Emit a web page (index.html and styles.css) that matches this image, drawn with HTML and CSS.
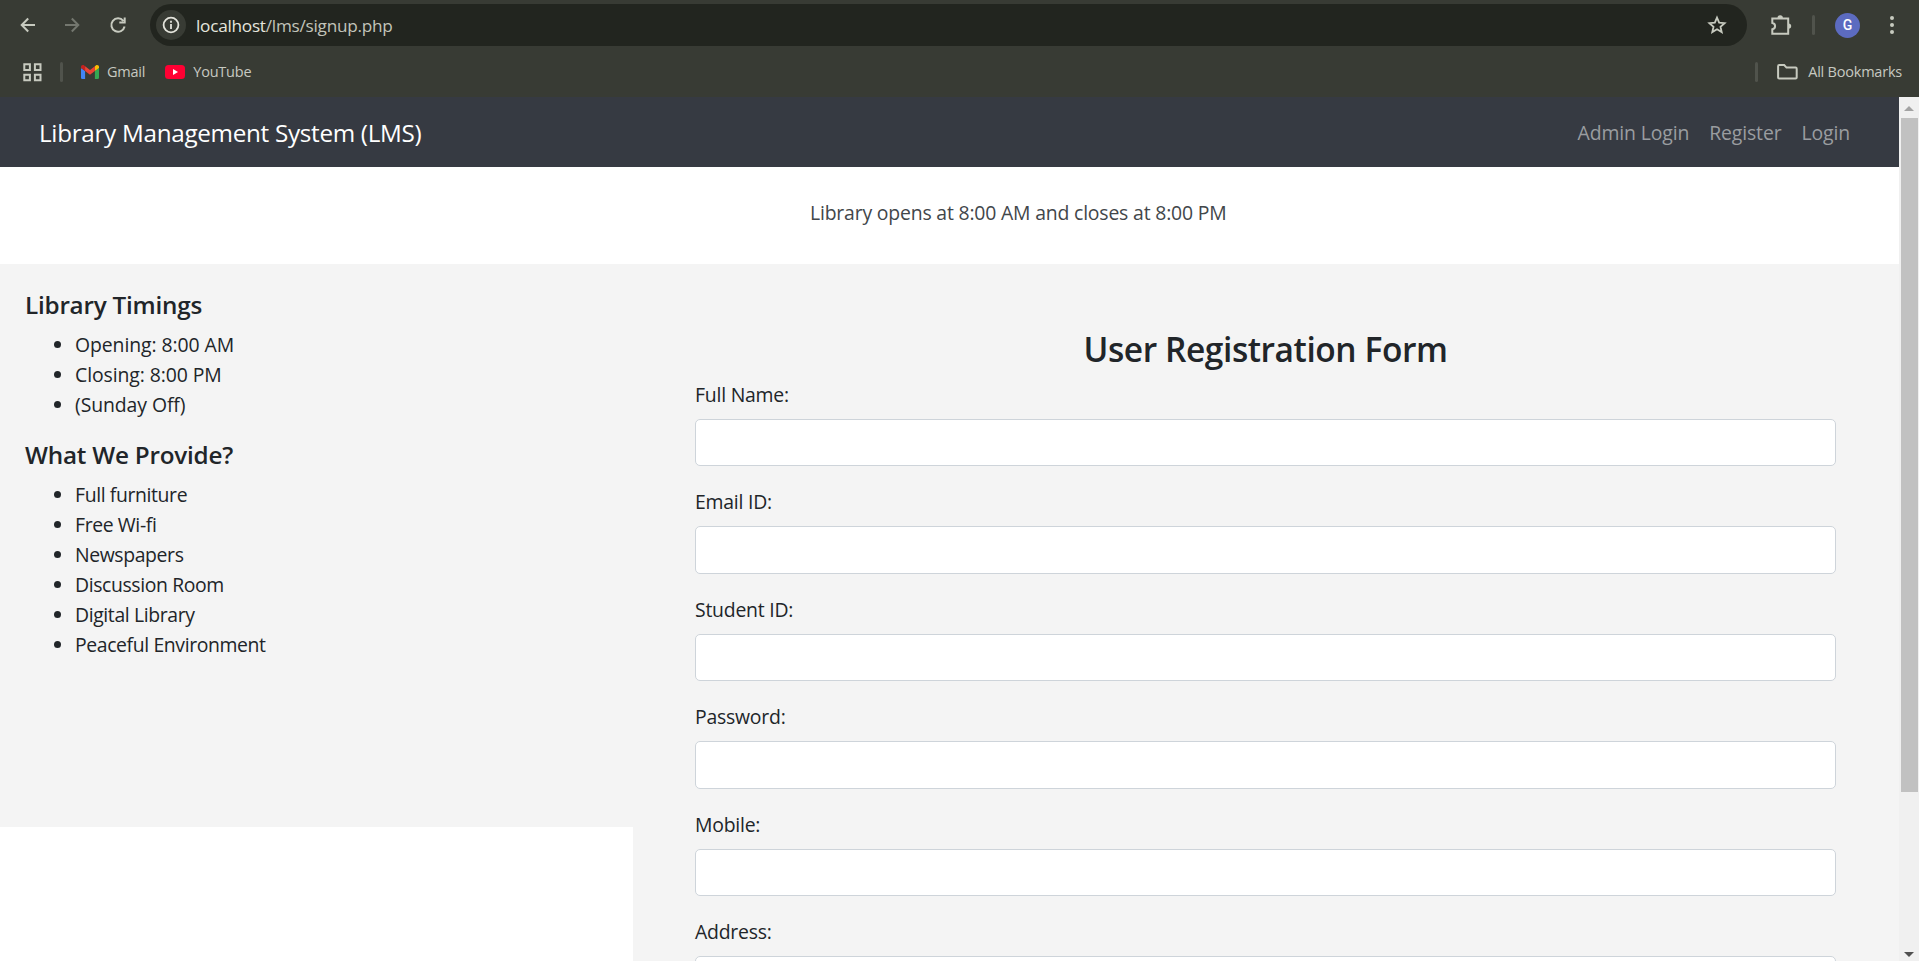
FILE: index.html
```
<!DOCTYPE html>
<html lang="en">
<head>
<meta charset="utf-8">
<title>LMS - Sign up</title>
<link rel="stylesheet" href="styles.css">
</head>
<body>
<header class="chrome">
  <div class="toolbar">
    <svg class="icon back" width="16" height="16" viewBox="0 0 16 16"><path d="M15 8H2M8.200 1.500L1.700 8l6.500 6.500"/></svg>
    <svg class="icon forward" width="16" height="16" viewBox="0 0 16 16"><path d="M1 8h13M7.800 1.500L14.300 8l-6.500 6.500"/></svg>
    <svg class="icon reload" width="18" height="18" viewBox="0 0 18 18"><path d="M14.300 4.800A6.700 6.700 0 1 0 15.600 10.500M15.700 1.500V6.500H10.300"/></svg>
    <div class="omnibox">
      <span class="info"><svg class="icon" width="18" height="18" viewBox="0 0 18 18"><circle cx="9" cy="9" r="7.400"/><path d="M9 8v5M9 4.800v1.900"/></svg></span>
      <span class="url">localhost<span class="path">/lms/signup.php</span></span>
      <svg class="icon star" width="20" height="20" viewBox="0 0 20 20"><path d="M10 2.600l2.150 5.050 5.450.5-4.120 3.620 1.230 5.330L10 14.250 5.290 17.100l1.230-5.330L2.400 8.150l5.450-.5z"/></svg>
    </div>
    <svg class="icon puzzle" width="22" height="22" viewBox="0 0 22 22"><path d="M2.300 4.500H18.200V19.700H2.300V15.300C6 14.800 6 9.400 2.300 8.900Z"/><path class="solid" d="M7.500 4a2.700 2.700 0 0 1 5.400 0zM18.500 9.400a2.700 2.700 0 0 1 0 5.400z"/></svg>
    <span class="rule toolbar-rule"></span>
    <span class="avatar">G</span>
    <svg class="dots" width="4" height="18" viewBox="0 0 4 18"><circle cx="2" cy="2" r="2"/><circle cx="2" cy="9" r="2"/><circle cx="2" cy="16" r="2"/></svg>
  </div>
  <div class="bookmarks">
    <svg class="icon apps" width="19" height="19" viewBox="0 0 19 19"><path d="M1.300 1.300h5.600v5.600H1.300zM11.900 1.300h5.600v5.600h-5.600zM1.300 11.700h5.600v5.600H1.300zM11.900 11.700h5.600v5.600h-5.600z"/></svg>
    <span class="rule"></span>
    <a class="bookmark gmail"><svg width="18" height="14" viewBox="0 0 18 14"><path fill="#4285f4" d="M0 3l4.100 3v8H1.300A1.300 1.300 0 0 1 0 12.700z"/><path fill="#34a853" d="M18 3l-4.100 3v8h2.800a1.300 1.300 0 0 0 1.300-1.300z"/><path fill="#c5221f" d="M0 3V1.900C0 .2 1.900-.5 3.200.5l.9.7V6z"/><path fill="#fbbc04" d="M18 3V1.900C18 .2 16.100-.5 14.800.5l-.9.7V6z"/><path fill="#ea4335" d="M4.100 1.200L9 4.900l4.900-3.700V6L9 9.700 4.100 6z"/></svg>Gmail</a>
    <a class="bookmark youtube"><svg width="20" height="14" viewBox="0 0 20 14"><rect width="20" height="14" rx="3.500" fill="#ff0033"/><path fill="#fff" d="M8 4l5 3-5 3z"/></svg>YouTube</a>
    <span class="rule all-rule"></span>
    <a class="bookmark all"><svg class="icon" width="21" height="16" viewBox="0 0 21 16"><path d="M1.100 13.400V2.200Q1.100 1.100 2.200 1.100H7.200L9.500 3.600H18.600Q19.700 3.600 19.700 4.700V13.400Q19.700 14.500 18.600 14.500H2.200Q1.100 14.500 1.100 13.400Z"/></svg>All Bookmarks</a>
  </div>
</header>
<div class="viewport">
  <div class="page">
    <nav class="navbar">
      <a class="brand">Library Management System (LMS)</a>
      <div class="links"><a class="admin">Admin Login</a><a>Register</a><a>Login</a></div>
    </nav>
    <div class="notice"><span>Library opens at 8:00 AM and closes at 8:00 PM</span></div>
    <div class="row">
      <aside class="sidebar">
        <h5>Library Timings</h5>
        <ul class="hours"><li>Opening: 8:00 AM</li><li>Closing: 8:00 PM</li><li>(Sunday Off)</li></ul>
        <h5>What We Provide?</h5>
        <ul><li>Full furniture</li><li>Free Wi-fi</li><li>Newspapers</li><li>Discussion Room</li><li>Digital Library</li><li>Peaceful Environment</li></ul>
      </aside>
      <main class="content">
        <h3>User Registration Form</h3>
        <form>
          <div class="group"><label for="name">Full Name:</label><input id="name" type="text"></div>
          <div class="group"><label for="email">Email ID:</label><input id="email" type="text"></div>
          <div class="group"><label for="sid">Student ID:</label><input id="sid" type="text"></div>
          <div class="group"><label for="pass">Password:</label><input id="pass" type="password"></div>
          <div class="group"><label for="mobile">Mobile:</label><input id="mobile" type="text"></div>
          <div class="group"><label for="address">Address:</label><input id="address" type="text"></div>
        </form>
      </main>
    </div>
  </div>
  <div class="scrollbar">
    <svg width="10" height="5" viewBox="0 0 10 5"><path fill="#a3a3a3" d="M0 5L5 0l5 5z"/></svg>
    <span class="thumb"></span>
    <svg class="down" width="10" height="5" viewBox="0 0 10 5"><path fill="#505050" d="M0 0h10L5 5z"/></svg>
  </div>
</div>
</body>
</html>
```
FILE: styles.css
```
* { box-sizing: border-box; }
body {
  margin: 0;
  height: 961px;
  overflow: hidden;
  display: flex;
  flex-direction: column;
  background: #fff;
  color: #212529;
  font: 19.4px/30px "Open Sans", "Noto Sans", sans-serif;
  letter-spacing: -0.22px;
}
.chrome { height: 97px; flex: none; background: #383b34; color: #c7c9c1; }
.toolbar { display: flex; align-items: center; height: 50px; padding: 0 22px 0 20px; }
.icon { flex: none; fill: none; stroke: #c7cabf; stroke-width: 2; }
.icon .solid { fill: #c7cabf; stroke: none; }
.forward { margin-left: 28px; stroke: #74776f; }
.reload { margin-left: 29px; }
.omnibox {
  display: flex;
  align-items: center;
  flex: 1;
  height: 42px;
  margin-left: 23px;
  padding: 0 20px 0 6px;
  border-radius: 21px;
  background: #22251f;
}
.info {
  display: flex;
  align-items: center;
  justify-content: center;
  width: 30px;
  height: 30px;
  border-radius: 50%;
  background: #383b34;
}
.info .icon { stroke: #e3e3db; stroke-width: 1.8; }
.url { margin-left: 10px; padding-top: 2px; font-size: 17.200px; letter-spacing: -0.25px; color: #e5e6de; }
.path { color: #c2c4ba; }
.star { margin-left: auto; stroke-width: 1.8; }
.puzzle { margin-left: 23px; }
.rule { width: 3px; height: 20px; border-radius: 2px; background: #50534c; }
.toolbar-rule { margin-left: 20px; }
.avatar {
  width: 25px;
  height: 25px;
  margin-left: 20px;
  border-radius: 50%;
  background: #5c6bc0;
  color: #fff;
  font: 500 14px/25px Roboto, sans-serif;
  text-align: center;
}
.dots { margin-left: 30px; margin-right: 3px; fill: #c7cabf; }
.bookmarks { display: flex; align-items: center; height: 44px; padding: 0 17px 0 23px; font-size: 14.500px; letter-spacing: -0.22px; }
.bookmarks .rule { margin-left: 18px; }
.bookmark { display: flex; align-items: center; }
.gmail { margin-left: 18px; gap: 8px; }
.youtube { margin-left: 20px; gap: 8px; }
.bookmarks .all-rule { margin-left: auto; }
.all { margin-left: 19px; gap: 10px; }
.viewport { display: flex; flex: 1; min-height: 0; }
.page { flex: 1; overflow: hidden; }
.navbar {
  display: flex;
  align-items: center;
  justify-content: space-between;
  height: 70px;
  padding: 2px 49px 0 39px;
  background: #363a42;
}
.brand { color: #fff; font-size: 24.250px; letter-spacing: -0.3px; }
.links { display: flex; gap: 20px; color: #9a9da0; letter-spacing: -0.12px; }
.notice { height: 97px; padding-top: 31px; color: #42464a; letter-spacing: -0.18px; }
.notice span { margin-left: 810px; }
.row { display: grid; grid-template-columns: 633px 1fr; align-items: start; }
.sidebar { height: 563px; padding: 26px 25px; background: #f4f4f4; }
h5 { margin: 0 0 10px; font-size: 24.250px; line-height: 30px; font-weight: 600; letter-spacing: -0.22px; }
ul { margin: 0 0 20px; padding-left: 50px; letter-spacing: -0.38px; }
.hours { letter-spacing: -0.08px; }
.content { height: 900px; padding: 62.900px 63px 0 62px; background: #f4f4f4; }
h3 { margin: 0 0 9px; font-size: 33.500px; line-height: 44px; font-weight: 600; letter-spacing: -0.43px; text-align: center; }
.group { height: 107.450px; }
label { display: block; margin-bottom: 9px; }
input {
  display: block;
  width: 100%;
  height: 47.500px;
  border: 1px solid #ced4da;
  border-radius: 5px;
  background: #fff;
}
.scrollbar { display: flex; flex-direction: column; align-items: center; width: 20px; padding: 9px 0 4px; background: #f0f0f0; }
.thumb { width: 17px; height: 674px; margin-top: 7px; background: #c1c1c1; }
.down { margin-top: auto; }
```
